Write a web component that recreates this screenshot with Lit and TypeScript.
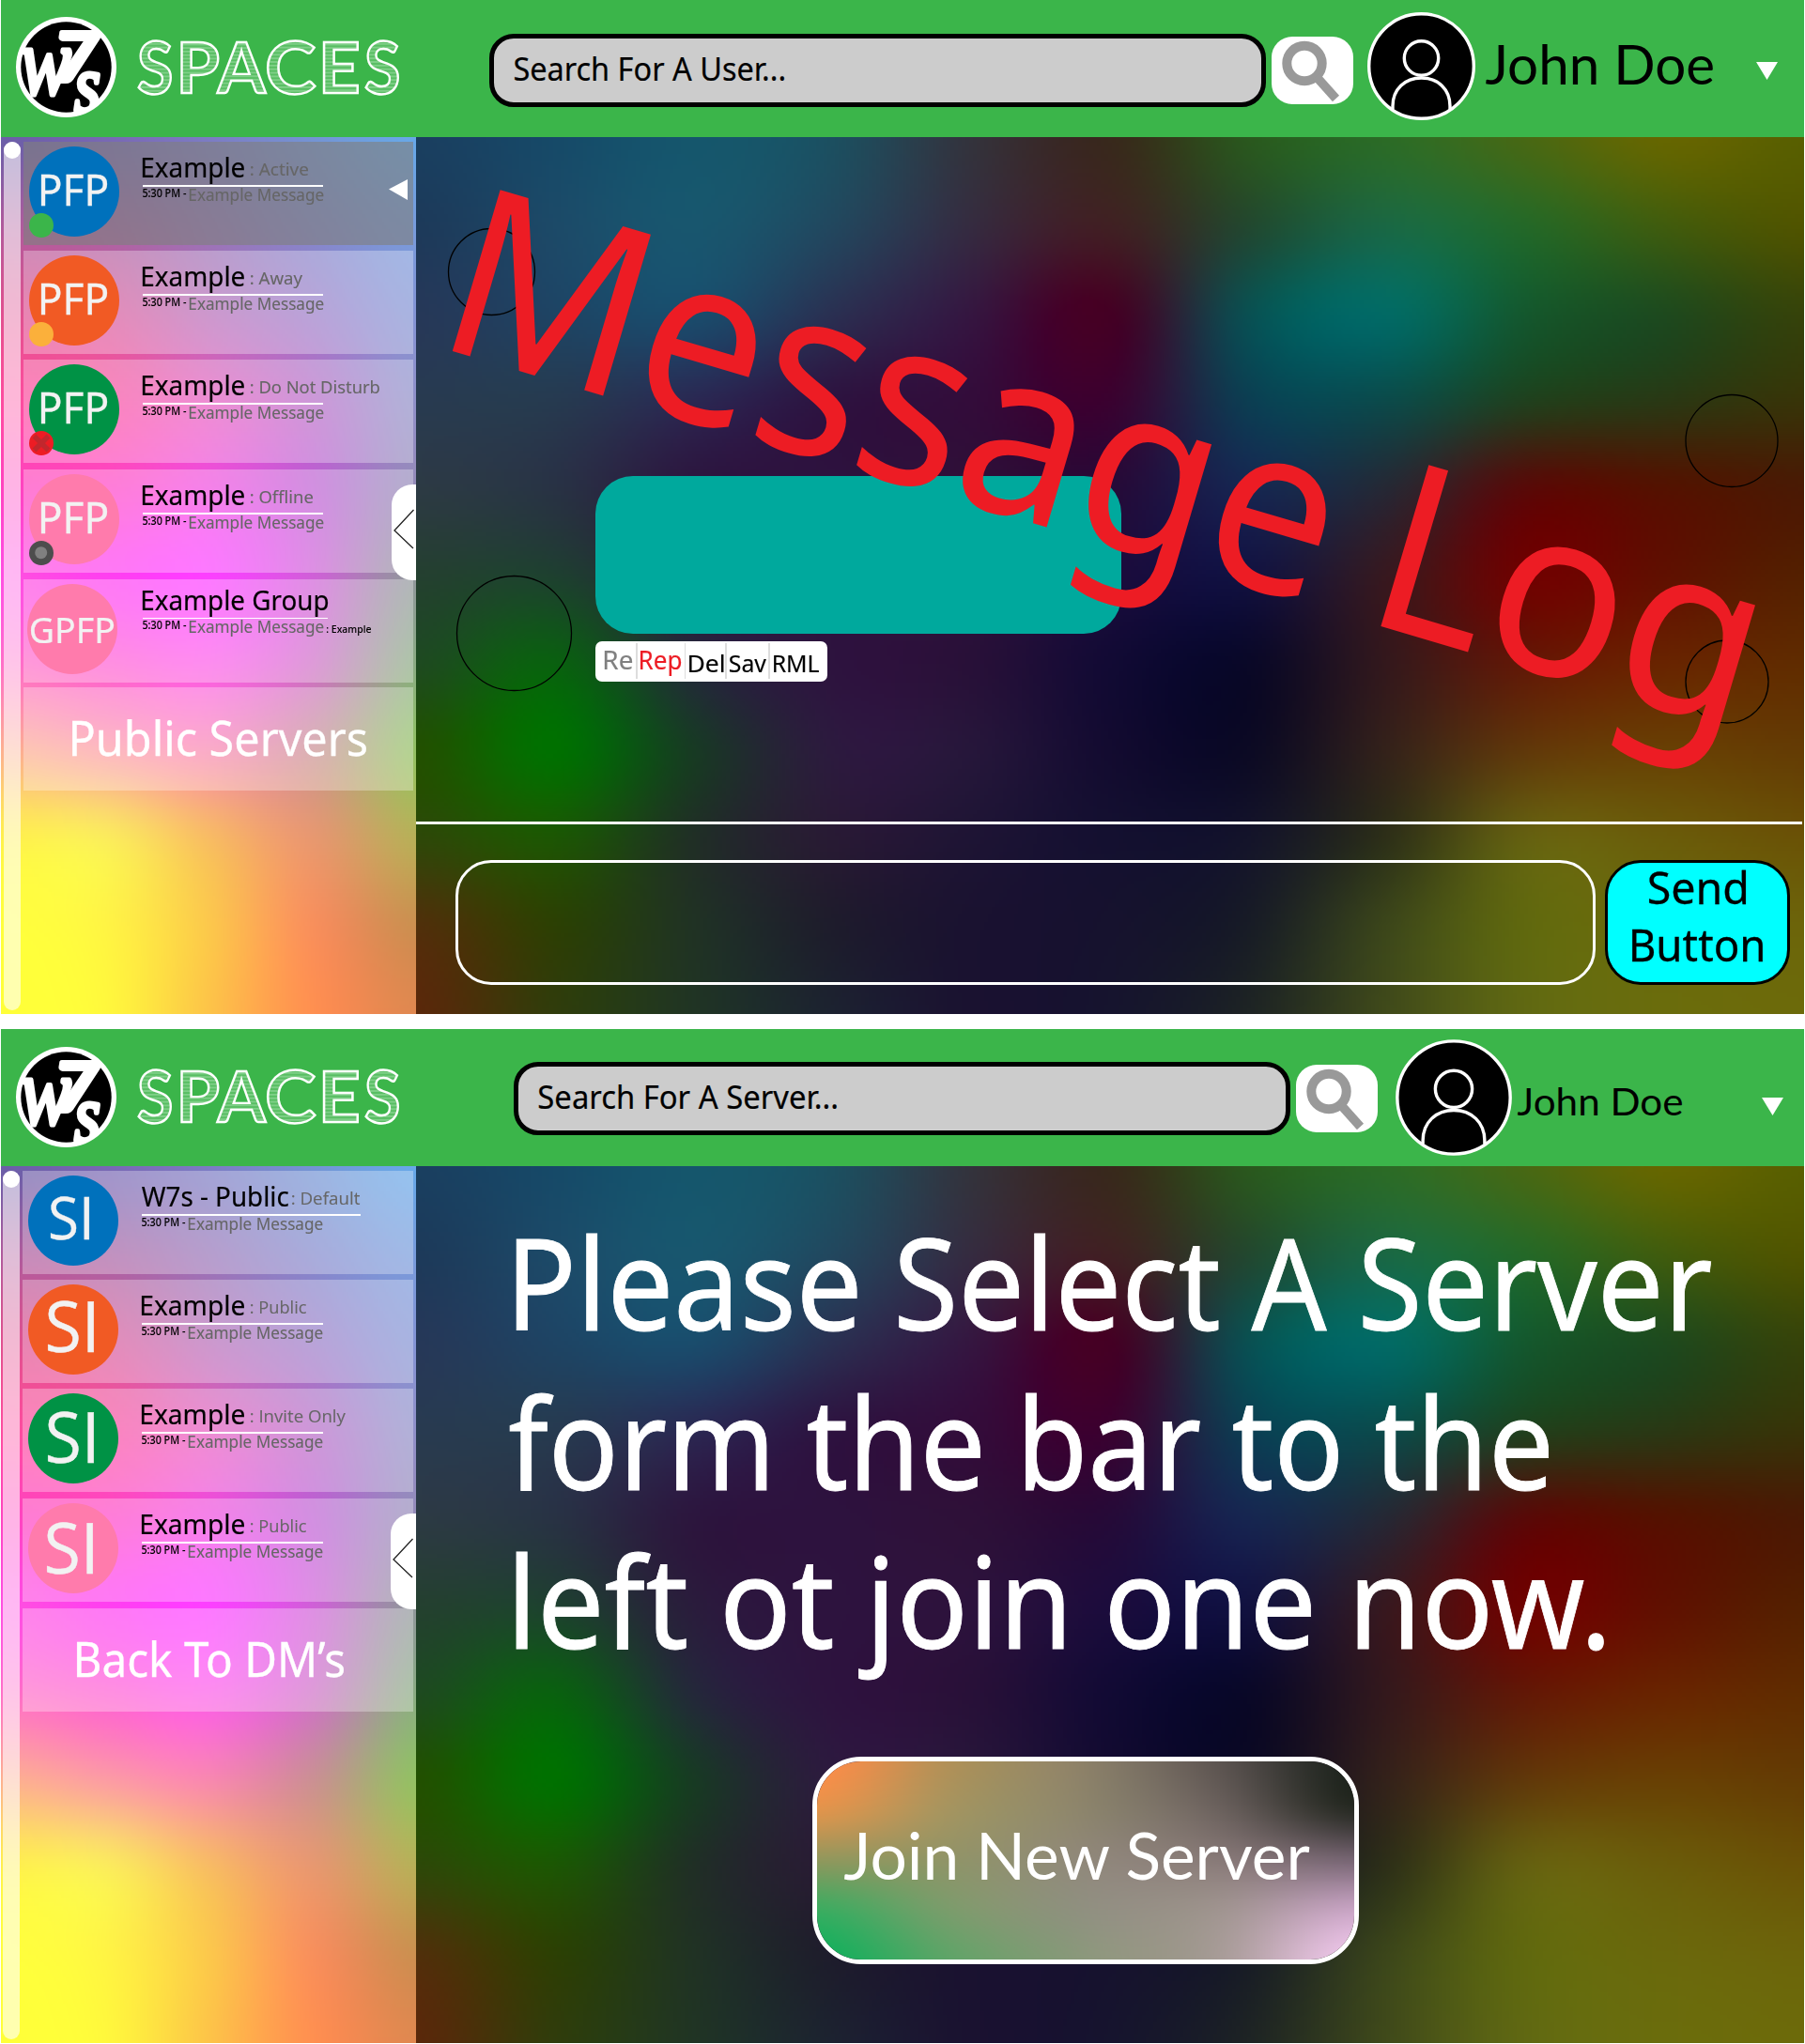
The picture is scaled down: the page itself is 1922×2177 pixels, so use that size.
import { LitElement, html, css, svg, nothing } from "lit";
import { customElement, property } from "lit/decorators.js";

const SANS = '"Noto Sans", "Open Sans", sans-serif';
const PLAIN = '"Open Sans", sans-serif';
const ROUND = "Lato, sans-serif";
const pen = document.createElement("canvas").getContext("2d")!;

/** One line of text whose ink is `w` wide and whose capitals are `cap` high; the box ends on the baseline. */
function ink(text: string, w: number, cap: number, weight = 400, family = SANS) {
  const size = cap / (family === ROUND ? 0.72 : 0.714);
  pen.font = `${weight} 200px ${family}`;
  const m = pen.measureText(text);
  const k = size / 200;
  const sx = w / ((m.actualBoundingBoxLeft + m.actualBoundingBoxRight) * k);
  const dx = m.actualBoundingBoxLeft * k * sx;
  return html`<svg class="ink" width=${w} height=${cap}>
    <text transform="translate(${dx} ${cap}) scale(${sx} 1)" font-family=${family} font-size=${size} font-weight=${weight} stroke-width=${family === ROUND ? 0 : size * 0.006}>${text}</text>
  </svg>`;
}

/** A glyph stretched so that its ink fills the given rectangle. */
function glyph(text: string, font: string, style: string, weight: number, x: number, y: number, w: number, h: number, cls: string) {
  pen.font = `${style} ${weight} 100px ${font}`;
  const m = pen.measureText(text);
  const sx = w / (m.actualBoundingBoxLeft + m.actualBoundingBoxRight);
  const sy = h / (m.actualBoundingBoxAscent + m.actualBoundingBoxDescent);
  const tx = x + m.actualBoundingBoxLeft * sx;
  const ty = y + m.actualBoundingBoxAscent * sy;
  return svg`<text class=${cls} transform="translate(${tx} ${ty}) scale(${sx} ${sy})"
    font-family=${font} font-style=${style} font-weight=${weight} font-size="100">${text}</text>`;
}

const shared = css`
  :host { display: block; box-sizing: border-box; font-family: "Noto Sans", "Open Sans", sans-serif; }
  *, *::before, *::after { box-sizing: border-box; }
  svg { display: block; flex: none; overflow: visible; }
  .ink text { fill: currentColor; stroke: currentColor; white-space: pre; }
`;

type Mesh = string[];

const SIDE: Mesh = [
  "6c5ea8 7868b4 7c7cc4 7494d4 68a8e8",
  "b05a9c a862a4 9874b8 8488cc 789cdc",
  "e05090 d85a9c b86cb8 9c7cc8 8494d4",
  "fc4ca0 f850a4 e45cc0 b86cc8 9090c8",
  "ff44c0 ff46c8 f04ce0 c060d4 948cb8",
  "ff50e0 ff40f0 fc40ff d060d8 90989c",
  "ff70c8 ff60d4 fc5ce8 d070c8 8cac84",
  "fdb090 fc9ca4 f888b0 cc9094 94c064",
  "fff04c fbec5c f8bc64 e89870 b8b058",
  "ffff3c fff444 fcc84c f8905c cc9050",
  "ffff38 fff83c fdc448 ff9050 e08850",
];

const MAIN: Mesh = [
  "1a3f60 164a68 15566c 1c4f60 33333c 38291c 2a581e 2c6b26 486814 666600 585f00",
  "1d3a5a 1c4a68 18566e 22475e 352b40 402023 224830 1a6844 246828 405c0e 505400",
  "263858 1e4464 1a4c6c 2a3052 351640 440024 0a5052 026a64 14582e 1e4a1e 36430a",
  "283a50 263a50 2a2852 2d1340 330c3a 3a0230 0c3e52 0c4a4a 20401e 2a3814 383408",
  "2c3a44 283244 2c163e 2d123e 2e1038 260a38 162650 262834 580a08 541200 4a1a04",
  "244030 1e4030 2a1c3c 2d133e 2c123c 1c0c3c 121240 38181f 6e0200 601000 542000",
  "1e4a20 0a6010 24283a 2d133e 281038 120a34 0a0828 34181c 621806 682400 602c00",
  "225000 007000 183a24 2c1a3e 26163a 130b30 0c0a24 34221a 60380a 684004 643c04",
  "2e4808 1c5604 202f26 281a34 1e1434 141030 14142a 2e3018 646010 6a5c0a 6a5206",
  "50300a 2c4004 203224 1e1c2c 1a1230 16122e 181c26 3c461a 60680e 6a680c 6c640a",
  "5a280a 303c0c 203424 1c2230 1a1230 16142e 1e2424 404a1a 606812 6a6c0c 6c6a0a",
];

const JOIN: Mesh = [
  "ff8c48 b09058 8c8068 5c5450 1c221c",
  "e0944c a49460 8c846c 6c625e 2a2c26",
  "90985c 909468 90887a 887a78 786674",
  "3cac60 7c9c6c 909080 a09490 c8a4c4",
  "10b05c 60a468 8c987c a89c98 f0c8ec",
];

/** Smoothly interpolated colour mesh. */
@customElement("colour-mesh")
class ColourMesh extends LitElement {
  @property({ attribute: false }) mesh: Mesh = MAIN;
  static styles = css`
    :host { display: block; }
    canvas { display: block; width: 100%; height: 100%; }
  `;
  render() {
    return html`<canvas width="370" height="234"></canvas>`;
  }
  firstUpdated() {
    const canvas = this.renderRoot.querySelector("canvas")!;
    const g = canvas.getContext("2d")!;
    const rows = this.mesh.map((r) =>
      r.split(" ").map((c) => [0, 2, 4].map((i) => parseInt(c.slice(i, i + 2), 16))),
    );
    const W = canvas.width, H = canvas.height, R = rows.length, C = rows[0].length;
    const clamp = (v: number, m: number) => Math.max(0, Math.min(m, v));
    const weights = (t: number) => [
      (-t + 2 * t * t - t * t * t) / 2,
      (2 - 5 * t * t + 3 * t * t * t) / 2,
      (t + 4 * t * t - 3 * t * t * t) / 2,
      (-t * t + t * t * t) / 2,
    ];
    const data = g.createImageData(W, H);
    for (let y = 0; y < H; y++) {
      const fy = (y / (H - 1)) * (R - 1);
      const iy = Math.min(Math.floor(fy), R - 2);
      const wy = weights(fy - iy);
      for (let x = 0; x < W; x++) {
        const fx = (x / (W - 1)) * (C - 1);
        const ix = Math.min(Math.floor(fx), C - 2);
        const wx = weights(fx - ix);
        const o = (y * W + x) * 4;
        for (let ch = 0; ch < 3; ch++) {
          let v = 0;
          for (let j = 0; j < 4; j++)
            for (let i = 0; i < 4; i++)
              v += wy[j] * wx[i] * rows[clamp(iy - 1 + j, R - 1)][clamp(ix - 1 + i, C - 1)][ch];
          data.data[o + ch] = clamp(Math.round(v), 255);
        }
        data.data[o + 3] = 255;
      }
    }
    g.putImageData(data, 0, 0);
  }
}

interface HeaderSpec {
  logoTop: number;
  placeholder: string;
  textWidth: number;
  searchLeft: number;
  searchTop: number;
  avatar: number;
  avatarGap: number;
  avatarTop: number;
  nameGap: number;
  nameWidth: number;
  nameCap: number;
  nameBase: number;
  caretGap: number;
  caretTop: number;
}

@customElement("app-header")
class AppHeader extends LitElement {
  @property({ attribute: false }) spec!: HeaderSpec;
  static styles = [
    shared,
    css`
      .bar { display: flex; align-items: flex-start; height: 146px; background: #3bb54a; }
      .logo { margin-left: 16px; }
      .mark { fill: #fff; stroke: #fff; vector-effect: non-scaling-stroke; }
      .word { margin: 42px 0 0 22px; }
      .outline { fill: url(#hatch); stroke: #fff; stroke-width: 2.4px; vector-effect: non-scaling-stroke; stroke-linejoin: miter; }
      .search { display: flex; align-items: flex-start; }
      .field { width: 827px; height: 78px; border: 5px solid #000; border-radius: 26px; background: #ccc; padding: 20px 0 0 22px; color: #000; }
      .button { width: 87px; height: 72px; margin: 3px 0 0 5.5px; border-radius: 22px; background: #fff; }
      .name { color: #000; }
    `,
  ];
  render() {
    const s = this.spec;
    const k = s.avatar / 115;
    const script = '"Liberation Serif", serif';
    return html`<div class="bar">
      <svg class="logo" style="margin-top:${s.logoTop}px" width="107" height="107" viewBox="0 0 107 107">
        <defs><clipPath id="disc"><circle cx="53.5" cy="53.5" r="51" /></clipPath></defs>
        <circle cx="53.5" cy="53.5" r="53.5" fill="#fff" />
        <circle cx="53.5" cy="53.5" r="48.2" fill="#000" />
        <g clip-path="url(#disc)" stroke-width="4.5" stroke-linejoin="round">
          ${glyph("w", script, "italic", 400, 6, 35, 52, 48, "mark")}
          ${glyph("7", ROUND, "italic", 700, 45, 17, 44, 52, "mark")}
          ${glyph("s", script, "italic", 400, 63, 60, 25, 42, "mark")}
        </g>
      </svg>
      <svg class="word" width="281" height="60">
        <defs>
          <pattern id="hatch" width="40" height="5" patternUnits="userSpaceOnUse">
            <rect width="40" height="5" fill="#58be63" /><rect width="40" height="2.4" fill="#7fd088" />
          </pattern>
        </defs>
        ${glyph("S", ROUND, "normal", 700, 1.5, 1.5, 35, 57, "outline")}
        ${glyph("P", ROUND, "normal", 700, 47.5, 3, 39, 54, "outline")}
        ${glyph("A", ROUND, "normal", 700, 85, 3, 52, 54, "outline")}
        ${glyph("C", ROUND, "normal", 700, 138.5, 1.5, 51, 57, "outline")}
        ${glyph("E", ROUND, "normal", 700, 199, 3, 36, 54, "outline")}
        ${glyph("S", ROUND, "normal", 700, 243.5, 1.5, 35, 57, "outline")}
      </svg>
      <div class="search" style="margin:${s.searchTop}px 0 0 ${s.searchLeft}px">
        <div class="field">${ink(s.placeholder, s.textWidth, 24.5)}</div>
        <div class="button">
          <svg width="87" height="72" fill="none" stroke="#999">
            <circle cx="35" cy="28.5" r="18.7" stroke-width="10" />
            <path d="M47.5 42.5 L68.5 66" stroke-width="9.5" />
          </svg>
        </div>
      </div>
      <svg style="margin:${s.avatarTop}px 0 0 ${s.avatarGap}px" width=${s.avatar} height=${s.avatar} viewBox="0 0 115 115" fill="none" stroke="#fff" stroke-width=${3.4 / k}>
        <circle cx="57.5" cy="57.5" r="55.8" fill="#000" />
        <circle cx="57.5" cy="49" r="18.2" />
        <path d="M27 103.5 V100 C27 82 40 70 57.5 70 C75 70 88 82 88 100 V103.5" />
      </svg>
      <div class="name" style="margin:${s.nameBase - s.nameCap}px 0 0 ${s.nameGap}px">${ink("John Doe", s.nameWidth, s.nameCap, 400, ROUND)}</div>
      <svg style="margin:${s.caretTop}px 0 0 ${s.caretGap}px" width="23" height="19"><path d="M0 0 H23 L11.5 19 Z" fill="#fff" /></svg>
    </div>`;
  }
}

interface Row {
  color: string;
  label: string;
  labelWidth: number;
  labelCap: number;
  labelBase: number;
  labelShift?: number;
  name: string;
  nameWidth: number;
  tag?: string;
  tagWidth?: number;
  tagGap?: number;
  status?: "active" | "away" | "dnd" | "offline";
  selected?: boolean;
  group?: boolean;
  family?: string;
  rule: number;
  gap: number;
}

@customElement("side-bar")
class SideBar extends LitElement {
  @property({ attribute: false }) rows: Row[] = [];
  @property() action = "";
  @property({ type: Number }) actionWidth = 0;
  @property({ type: Number }) actionLeft = 0;
  static styles = [
    shared,
    css`
      :host { position: relative; width: 442px; height: 934px; }
      .back { position: absolute; inset: 0; }
      .content { position: relative; display: flex; gap: 3px; padding: 5px 3px 4px; height: 934px; }
      :host([wide]) .content { padding-left: 2px; }
      :host([wide]) .list { width: 416px; }
      :host([wide]) .tab { width: 27px; }
      .track { width: 18px; height: 925px; border-radius: 9px; background: rgba(255, 255, 255, 0.6); }
      .thumb { width: 18px; height: 18px; border-radius: 50%; background: #fff; }
      .list { width: 415px; }
      .row { position: relative; display: flex; height: 110px; background: rgba(255, 255, 255, 0.3); }
      .row.selected { background: rgba(128, 128, 128, 0.62); }
      .face { margin: 5px 25px 0 6px; }
      .group .face { margin: 5px 27px 0 4px; }
      .badge { position: absolute; left: 6px; top: 76px; }
      .text { display: flex; flex-direction: column; align-items: flex-start; color: #000; }
      .title { display: flex; align-items: flex-end; height: 38px; }
      .tag { margin-bottom: 1.5px; color: #666; }
      .rule { height: 2px; margin-top: 8px; background: #fff; flex: none; }
      .last { display: flex; align-items: flex-start; margin-top: 2px; }
      .msg { margin-left: 3.5px; color: #666; }
      .group .title { height: 33px; }
      .group .rule { height: 1px; }
      .group .last { margin-top: 2px; }
      .from { margin: 5px 0 0 4px; }
      .pointer { position: absolute; right: 6px; top: 40px; }
      .action { height: 110px; padding-top: 37px; background: rgba(255, 255, 255, 0.3); color: #fff; }
      .tab { position: absolute; right: 0; top: 370px; width: 26px; height: 102px; background: #fff; border-radius: 22px 0 0 22px; }
    `,
  ];
  private badge(status?: string) {
    if (!status) return nothing;
    const fill = { active: "#3bb54a", away: "#fbb03b", dnd: "#ed1c24", offline: "#4d4d4d" }[status];
    return html`<svg class="badge" width="26" height="26">
      <circle cx="13" cy="13" r="13" fill=${fill!} />
      ${status === "dnd" ? svg`<path d="M5.5 5.5 L20.5 20.5 M20.5 5.5 L5.5 20.5" stroke="#c1272d" stroke-width="5.5" />` : nothing}
      ${status === "offline" ? svg`<circle cx="12.7" cy="12.7" r="6.5" fill="#808080" />` : nothing}
    </svg>`;
  }
  render() {
    return html`
      <colour-mesh class="back" .mesh=${SIDE}></colour-mesh>
      <div class="content">
        <div class="track"><div class="thumb"></div></div>
        <div class="list">
          ${this.rows.map(
            (r) => html`<div class="row ${r.selected ? "selected" : ""} ${r.group ? "group" : ""}" style="margin-bottom:${r.gap}px">
              <svg class="face" width="96" height="96">
                <circle cx="48" cy="48" r="48" fill=${r.color} />
                <foreignObject x=${48 - r.labelWidth / 2 + (r.labelShift ?? 0)} y=${r.labelBase - 5 - r.labelCap} width=${r.labelWidth} height=${r.labelCap} style="overflow:visible;color:#f2f2f2">
                  ${ink(r.label, r.labelWidth, r.labelCap, 400, r.family)}
                </foreignObject>
              </svg>
              ${this.badge(r.status)}
              <div class="text">
                <div class="title">
                  ${ink(r.name, r.nameWidth, 21.3)}
                  ${r.tag ? html`<div class="tag" style="margin-left:${r.tagGap}px">${ink(r.tag, r.tagWidth!, 13.2, 400, r.family)}</div>` : nothing}
                </div>
                <div class="rule" style="width:${r.rule}px"></div>
                <div class="last">
                  ${ink("5:30 PM -", 46, 9, 500)}
                  <div class="msg">${ink("Example Message", 142.5, 12.8)}</div>
                  ${r.group ? html`<div class="from">${ink(": Example", 47, 7.8, 500)}</div>` : nothing}
                </div>
              </div>
              ${r.selected ? html`<svg class="pointer" width="20" height="22"><path d="M20 0 V22 L0 10.5 Z" fill="#fff" /></svg>` : nothing}
            </div>`,
          )}
          <div class="action" style="padding-left:${this.actionLeft}px">${ink(this.action, this.actionWidth, 36.3)}</div>
        </div>
      </div>
      <div class="tab">
        <svg width="26" height="102"><path d="M23.5 27 L3 49 L23 68" fill="none" stroke="#222" stroke-width="1.3" /></svg>
      </div>
    `;
  }
}

@customElement("message-view")
class MessageView extends LitElement {
  static styles = [
    shared,
    css`
      :host { position: relative; width: 1478px; height: 934px; }
      .back, .rings, .headline { position: absolute; inset: 0; }
      .headline text { fill: #ed1c24; font-family: "Noto Sans", "Open Sans", sans-serif; }
      .content { position: relative; display: flex; flex-direction: column; height: 934px; }
      .log { height: 729px; padding: 361px 0 0 191px; }
      .bubble { width: 560px; height: 168px; border-radius: 40px; background: #00a99d; }
      .tools { display: flex; width: 247px; height: 43px; margin-top: 8px; padding-left: 10px; border-radius: 7px; background: #fff; color: #000; }
      .tool { padding-top: 14px; }
      .tool.re { color: #808080; padding-top: 10px; }
      .tool.rep { color: #ed1c24; padding-top: 10px; }
      .sep { width: 1.5px; height: 38px; margin-top: 2px; background: #ddd; }
      .line { height: 3px; margin-right: 2px; background: #fff; flex: none; }
      .composer { display: flex; gap: 10px; padding: 38px 0 0 42px; }
      .input { width: 1214px; height: 133px; border: 3px solid #fff; border-radius: 38px; }
      .send { display: flex; flex-direction: column; align-items: center; width: 197px; height: 133px; padding-top: 9.5px; border: 3px solid #000; border-radius: 38px; background: #0ff; color: #000; gap: 27px; }
    `,
  ];
  private word(text: string, from: number, to: number) {
    pen.font = `400 251px ${SANS}`;
    const m = pen.measureText(text);
    const sx = (to - from) / (m.actualBoundingBoxLeft + m.actualBoundingBoxRight);
    return svg`<text font-size="251" transform="translate(${from + m.actualBoundingBoxLeft * sx} 0) scale(${sx} 1)">${text}</text>`;
  }
  render() {
    return html`
      <colour-mesh class="back" .mesh=${MAIN}></colour-mesh>
      <svg class="rings" width="1478" height="934" fill="none" stroke="#000" stroke-width="1.3">
        <circle cx="80.5" cy="143.5" r="46" /><circle cx="1401" cy="323.5" r="49" />
        <circle cx="104.5" cy="528.5" r="61" /><circle cx="1396" cy="580" r="44" />
      </svg>
      <div class="content">
        <div class="log">
          <div class="bubble"></div>
          <div class="tools">
            <div class="tool re">${ink("Re", 29, 20)}</div>
            <div class="sep" style="margin-left:4px"></div>
            <div class="tool rep" style="margin-left:3px">${ink("Rep", 43, 20)}</div>
            <div class="sep" style="margin-left:4px"></div>
            <div class="tool" style="margin-left:3.5px">${ink("Del", 36.5, 18.5)}</div>
            <div class="sep" style="margin-left:2px"></div>
            <div class="tool" style="margin-left:3.5px">${ink("Sav", 39, 18.5)}</div>
            <div class="sep" style="margin-left:2px"></div>
            <div class="tool" style="margin-left:4.5px">${ink("RML", 48, 18.5)}</div>
          </div>
        </div>
        <div class="line"></div>
        <div class="composer">
          <div class="input"></div>
          <div class="send">${ink("Send", 103, 34)}${ink("Button", 139, 34)}</div>
        </div>
      </div>
      <svg class="headline" width="1478" height="934">
        <g transform="translate(38.6 227.9) rotate(16.5)">
          ${this.word("Message", 0, 944)}
          ${this.word("Log", 1031, 1408)}
        </g>
      </svg>
    `;
  }
}

@customElement("server-view")
class ServerView extends LitElement {
  static styles = [
    shared,
    css`
      :host { position: relative; width: 1478px; height: 934px; }
      .back { position: absolute; inset: 0; }
      .content { position: relative; display: flex; flex-direction: column; align-items: flex-start; padding: 79px 0 0 100px; color: #fff; gap: 73.5px; }
      .line { margin-left: 7px; }
      .line.hang { margin-left: 0; }
      .join { position: relative; width: 582px; height: 221px; margin: 41px 0 0 322px; border: 5px solid #fff; border-radius: 52px; overflow: hidden; }
      .label { position: relative; padding: 76px 0 0 29px; }
    `,
  ];
  render() {
    return html`
      <colour-mesh class="back" .mesh=${MAIN}></colour-mesh>
      <div class="content">
        <div class="line">${ink("Please Select A Server", 1272, 96)}</div>
        <div class="line hang">${ink("form the bar to the", 1106, 96)}</div>
        <div class="line">${ink("left ot join one now.", 1158, 96)}</div>
        <div class="join">
          <colour-mesh class="back" .mesh=${JOIN}></colour-mesh>
          <div class="label">${ink("Join New Server", 497, 50, 400, ROUND)}</div>
        </div>
      </div>
    `;
  }
}

const BLUE = "#0071bc", ORANGE = "#f15a24", GREEN = "#009245", PINK = "#ff7bac";
const pfp = { label: "PFP", labelWidth: 70, labelCap: 32, labelBase: 67.7, labelShift: 0, name: "Example", nameWidth: 108, tagGap: 7, rule: 192 };
const si = { label: "SI", family: PLAIN, labelWidth: 49, labelCap: 53.5, name: "Example", nameWidth: 109, tagGap: 7, rule: 193, labelShift: -2.5 };

const CHATS: Row[] = [
  { ...pfp, color: BLUE, tag: ": Active", tagWidth: 61, status: "active", selected: true, gap: 6 },
  { ...pfp, color: ORANGE, tag: ": Away", tagWidth: 55, status: "away", gap: 6 },
  { ...pfp, color: GREEN, tag: ": Do Not Disturb", tagWidth: 137, status: "dnd", gap: 7 },
  { ...pfp, color: PINK, tag: ": Offline", tagWidth: 66, status: "offline", gap: 7 },
  { ...pfp, color: PINK, label: "GPFP", labelWidth: 88, labelCap: 27.5, labelBase: 67.5, labelShift: 0, name: "Example Group", nameWidth: 197, rule: 197, group: true, gap: 5 },
];

const SERVERS: Row[] = [
  { ...si, color: BLUE, labelWidth: 41, labelCap: 45, labelBase: 73, labelShift: -4, name: "W7s - Public", nameWidth: 156, tagGap: 4, tag: ": Default", tagWidth: 72, rule: 233, gap: 6 },
  { ...si, color: ORANGE, labelBase: 76, tag: ": Public", tagWidth: 59, gap: 6 },
  { ...si, color: GREEN, labelBase: 78, tag: ": Invite Only", tagWidth: 101, gap: 7 },
  { ...si, color: PINK, labelBase: 79, labelShift: -4, tag: ": Public", tagWidth: 59, gap: 7 },
];

const USER_HEADER: HeaderSpec = {
  logoTop: 18, placeholder: "Search For A User...", textWidth: 287, searchLeft: 94, searchTop: 36,
  avatar: 115, avatarGap: 15, avatarTop: 13, nameGap: 11, nameWidth: 242, nameCap: 41.3, nameBase: 90.5, caretGap: 46, caretTop: 66,
};

const SERVER_HEADER: HeaderSpec = {
  logoTop: 19, placeholder: "Search For A Server...", textWidth: 317, searchLeft: 120, searchTop: 35,
  avatar: 124, avatarGap: 19, avatarTop: 11, nameGap: 6, nameWidth: 175, nameCap: 29.3, nameBase: 92, caretGap: 85, caretTop: 73,
};

@customElement("app-root")
class AppRoot extends LitElement {
  static styles = [
    shared,
    css`
      :host { width: 1922px; height: 2177px; background: #fff; overflow: hidden; }
      .page { display: flex; flex-direction: column; gap: 16px; padding: 0 1px 1px; }
      .screen { width: 1920px; height: 1080px; }
      .body { display: flex; }
    `,
  ];
  render() {
    return html`<div class="page">
      <div class="screen">
        <app-header .spec=${USER_HEADER}></app-header>
        <div class="body">
          <side-bar .rows=${CHATS} action="Public Servers" actionWidth="313" actionLeft="52"></side-bar>
          <message-view></message-view>
        </div>
      </div>
      <div class="screen">
        <app-header .spec=${SERVER_HEADER}></app-header>
        <div class="body">
          <side-bar wide .rows=${SERVERS} action="Back To DM’s" actionWidth="284" actionLeft="58"></side-bar>
          <server-view></server-view>
        </div>
      </div>
    </div>`;
  }
}
